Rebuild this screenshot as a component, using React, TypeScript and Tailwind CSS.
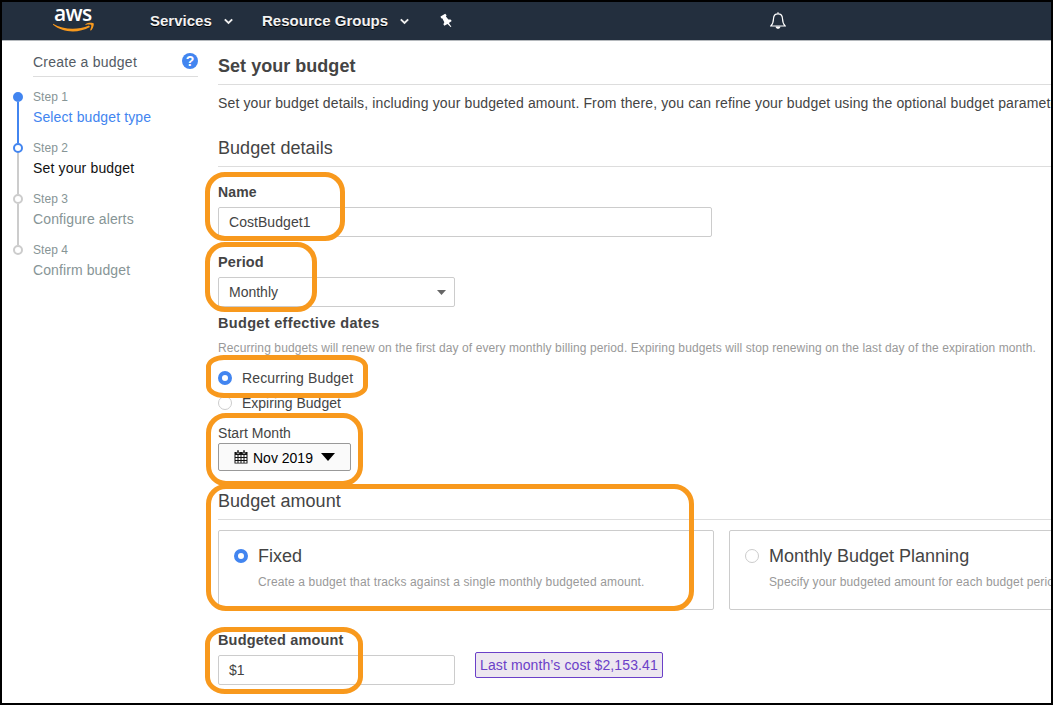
import React from "react";

function Radio({ checked }: { checked?: boolean }) {
  return checked ? (
    <span className="box-border block h-3.5 w-3.5 shrink-0 rounded-full border-4 border-[#4285f0] bg-white" />
  ) : (
    <span className="box-border block h-3.5 w-3.5 shrink-0 rounded-full border border-[#ccc] bg-white" />
  );
}

function NavChevron() {
  return (
    <svg className="h-[7px] w-[9px]" viewBox="0 0 9 7" fill="none" stroke="#eee" strokeWidth="1.9">
      <path d="M0.8 1.3 L4.5 5 L8.2 1.3" />
    </svg>
  );
}

function Header() {
  return (
    <header className="flex h-[39px] shrink-0 items-center border-b border-[#b5b9bd] bg-[#232f3e] text-[15px] font-bold text-[#f2f2f2]">
      <div className="ml-[50px] flex h-[39px] w-[98px] flex-col items-start">
        <span className="ml-[2px] mt-[2px] h-[18px] font-['Open_Sans',sans-serif] text-[21px] font-semibold leading-[18px] tracking-[-0.6px] text-white">
          aws
        </span>
        <svg className="h-[11px] w-[43px]" viewBox="0 0 43 11">
          <path d="M1 1.7 C11 7.6 25 8.6 37 3.6 L38 5 C26 11.6 11 10.8 1 2.7 Z" fill="#f8991d" />
          <path d="M33.4 2.2 C36 0.3 41 0.6 41.6 1.4 C42.3 2.6 41 6.8 38.9 8.6 L38.1 8.2 C39 6 39.7 3.7 39.1 3 C38.4 2.3 35.8 2.6 33.4 2.9 Z" fill="#f8991d" />
        </svg>
      </div>
      <span className="w-[74px] [text-shadow:0_1px_0_#000]">Services</span>
      <NavChevron />
      <span className="ml-[29px] w-[138px] tracking-[0.02px] [text-shadow:0_1px_0_#000]">Resource Groups</span>
      <NavChevron />
      <svg className="ml-[31px] mt-[-1px] h-[15px] w-[13px]" viewBox="0 0 13 15" fill="#fff">
        <path d="M0.5 3.6 L5.2 0.8 L6.6 2.2 L5.9 3.4 L8.4 6.6 L10.6 6.6 L11.7 8.1 L8.9 10 L11.4 13.8 L10.6 14 L7.5 10.9 L4.3 12.8 L3.4 11.3 L4.3 9.2 L2.4 5.4 L1.1 5.2 Z" />
      </svg>
      <svg className="ml-[317px] h-[18px] w-[16px]" viewBox="0 0 16 18" fill="none" stroke="#fff" strokeWidth="1.2">
        <path d="M8 0.3 V2 M0.8 14 C3.2 11.8 3.4 10.5 3.5 6.8 C3.6 3.6 5.2 1.9 8 1.9 C10.8 1.9 12.4 3.6 12.5 6.8 C12.6 10.5 12.8 11.8 15.2 14 Z" />
        <path d="M5.5 14.5 H10.5 C10 17.6 6 17.6 5.5 14.5 Z" fill="#fff" stroke="none" />
      </svg>
    </header>
  );
}

const steps = [
  { label: "Step 1", title: "Select budget type", text: "text-[#4285f0]", dot: "border-[#4285f0] bg-[#4285f0]", line: "bg-[#4285f0]", track: "tracking-[0.12px]" },
  { label: "Step 2", title: "Set your budget", text: "text-[#111]", dot: "border-[#4285f0] bg-white", line: "bg-[#ccc]", track: "tracking-[0.16px]" },
  { label: "Step 3", title: "Configure alerts", text: "text-[#879596]", dot: "border-[#ccc] bg-white", line: "bg-[#ccc]", track: "tracking-[0.12px]" },
  { label: "Step 4", title: "Confirm budget", text: "text-[#879596]", dot: "border-[#ccc] bg-white", line: "", track: "tracking-[0.1px]" },
];

function Sidebar() {
  return (
    <aside className="w-[216px] shrink-0">
      <div className="ml-[31px] flex h-9 w-[165px] items-center justify-between border-b border-[#ddd] pt-[7px] text-[14px] tracking-[0.24px] text-[#545b64]">
        <span>Create a budget</span>
        <span className="mt-[-3px] flex h-4 w-4 items-center justify-center rounded-full bg-[#4285f0] text-[14px] font-bold leading-none tracking-normal text-white">
          ?
        </span>
      </div>
      <ol className="mt-[10px] pl-[11px]">
        {steps.map((s) => (
          <li key={s.label} className="flex h-[51px]">
            <div className="flex w-[10px] flex-col items-center pt-[5px]">
              <span className={`block h-[10px] w-[10px] shrink-0 rounded-full border-2 ${s.dot}`} />
              {s.line && <span className={`-mb-[5px] block w-[2px] flex-1 ${s.line}`} />}
            </div>
            <div className="pl-[10px]">
              <div className="h-5 text-[12px] leading-5 tracking-[0.05px] text-[#879596]">{s.label}</div>
              <div className={`h-5 text-[14px] leading-5 ${s.track} ${s.text}`}>{s.title}</div>
            </div>
          </li>
        ))}
      </ol>
    </aside>
  );
}

function Main() {
  return (
    <main className="min-w-0 flex-1 overflow-hidden whitespace-nowrap text-[14px] leading-5 text-[#444]">
      <h1 className="h-11 border-b border-[#ddd] pt-[15px] text-[18px] font-bold tracking-[0.03px]">Set your budget</h1>
      <p className="mt-[8px] h-5 tracking-[0.13px]">
        Set your budget details, including your budgeted amount. From there, you can refine your budget using the optional budget parameters.
      </p>
      <h2 className="mt-[25px] h-[29px] border-b border-[#ddd] text-[18px] tracking-[0.05px]">Budget details</h2>

      <label className="mt-[15px] block h-5 font-bold tracking-[0.15px]">Name</label>
      <div className="mt-[5px] flex h-[30px] w-[494px] items-center rounded-[2px] border border-[#ccc] px-[10px] tracking-[0.05px]">CostBudget1</div>

      <label className="mt-[15px] block h-5 text-[14.5px] font-bold tracking-[0.1px]">Period</label>
      <div className="mt-[5px] flex h-[30px] w-[237px] items-center justify-between rounded-[2px] border border-[#ccc] pl-[10px] pr-[8px]">
        <span>Monthly</span>
        <svg className="mt-[1px] h-[5px] w-[9px]" viewBox="0 0 9 5"><path d="M0 0 H9 L4.5 5 Z" fill="#666" /></svg>
      </div>

      <h3 className="mt-[6px] h-5 text-[14.5px] font-bold tracking-[0.32px]">Budget effective dates</h3>
      <p className="mt-[5px] h-5 text-[12px] tracking-[0.1px] text-[#999]">
        Recurring budgets will renew on the first day of every monthly billing period. Expiring budgets will stop renewing on the last day of the expiration month.
      </p>
      <div className="mt-[10px] flex h-5 items-center gap-[10px]">
        <Radio checked />
        <span className="tracking-[0.14px]">Recurring Budget</span>
      </div>
      <div className="mt-[5px] flex h-5 items-center gap-[10px]">
        <Radio />
        <span>Expiring Budget</span>
      </div>
      <div className="mt-[10px] h-5 tracking-[0.05px]">Start Month</div>
      <div className="flex h-7 w-[133px] items-center rounded-[2px] border border-[#999] bg-[#fafafa] pl-[15px] text-black">
        <svg className="h-[14px] w-[14px]" viewBox="0 0 14 14">
          <path d="M0.5 2 H13.5 V13.5 H0.5 Z" fill="#111" />
          <path d="M3 0 H5 V3.5 H3 Z M9 0 H11 V3.5 H9 Z" fill="#111" stroke="#fafafa" strokeWidth="0.5" />
          <path d="M1.5 5 H3.5 V7 H1.5Z M4.5 5 H6.5 V7 H4.5Z M7.5 5 H9.5 V7 H7.5Z M10.5 5 H12.5 V7 H10.5Z M1.5 8 H3.5 V10 H1.5Z M4.5 8 H6.5 V10 H4.5Z M7.5 8 H9.5 V10 H7.5Z M10.5 8 H12.5 V10 H10.5Z M1.5 11 H3.5 V12.7 H1.5Z M4.5 11 H6.5 V12.7 H4.5Z M7.5 11 H9.5 V12.7 H7.5Z M10.5 11 H12.5 V12.7 H10.5Z" fill="#fafafa" />
        </svg>
        <span className="ml-[5px] mt-[2px] w-[68px]">Nov 2019</span>
        <svg className="h-2 w-[14px]" viewBox="0 0 14 8"><path d="M0 0 H14 L7 8 Z" /></svg>
      </div>

      <h2 className="mt-[20px] h-[29px] border-b border-[#ddd] text-[18px] tracking-[0.05px]">Budget amount</h2>
      <div className="mt-[10px] flex gap-[15px]">
        <div className="flex h-20 w-[496px] shrink-0 gap-[10px] rounded-[2px] border border-[#ccc] pl-[15px] pt-[15px]">
          <div className="pt-[3px]"><Radio checked /></div>
          <div>
            <div className="h-5 text-[18px]">Fixed</div>
            <div className="mt-[6px] h-5 text-[12px] tracking-[0.14px] text-[#999]">Create a budget that tracks against a single monthly budgeted amount.</div>
          </div>
        </div>
        <div className="flex h-20 w-[496px] shrink-0 gap-[10px] rounded-[2px] border border-[#ccc] pl-[15px] pt-[15px]">
          <div className="pt-[3px]"><Radio /></div>
          <div>
            <div className="h-5 text-[18px]">Monthly Budget Planning</div>
            <div className="mt-[6px] h-5 text-[12px] tracking-[0.11px] text-[#999]">Specify your budgeted amount for each budget period.</div>
          </div>
        </div>
      </div>

      <label className="mt-[20px] block h-5 text-[14.5px] font-bold tracking-[0.15px]">Budgeted amount</label>
      <div className="mt-[2px] flex items-start gap-[20px]">
        <div className="mt-[3px] flex h-[30px] w-[237px] items-center rounded-[2px] border border-[#ccc] px-[10px]">$1</div>
        <div className="flex h-[26px] w-[188px] items-center rounded-[2px] border border-[#6b40c8] bg-[#ede7f0] pl-1 tracking-[0.11px] text-[#6b40c8]">
          Last month’s cost $2,153.41
        </div>
      </div>
    </main>
  );
}

const highlights = [
  "left-[205px] top-[172px] h-[69px] w-[140px] rounded-[20px]",
  "left-[205px] top-[242px] h-[70px] w-[112px] rounded-[20px]",
  "left-[206px] top-[355px] h-[43px] w-[162px] rounded-[18px/12px]",
  "left-[206px] top-[413px] h-[73px] w-[157px] rounded-[20px]",
  "left-[206px] top-[484px] h-[127px] w-[488px] rounded-[20px]",
  "left-[205px] top-[627px] h-[67px] w-[158px] rounded-[20px/17px]",
];

export default function App() {
  return (
    <div className="relative flex h-[705px] w-[1053px] flex-col overflow-hidden border-2 border-black bg-white font-['Liberation_Sans',Arial,sans-serif]">
      <Header />
      <div className="flex min-h-0 flex-1">
        <Sidebar />
        <Main />
      </div>
      <div className="pointer-events-none absolute -left-[2px] -top-[2px]">
        {highlights.map((h) => (
          <div key={h} className={`absolute border-5 border-[#f8991d] ${h}`} />
        ))}
      </div>
    </div>
  );
}
